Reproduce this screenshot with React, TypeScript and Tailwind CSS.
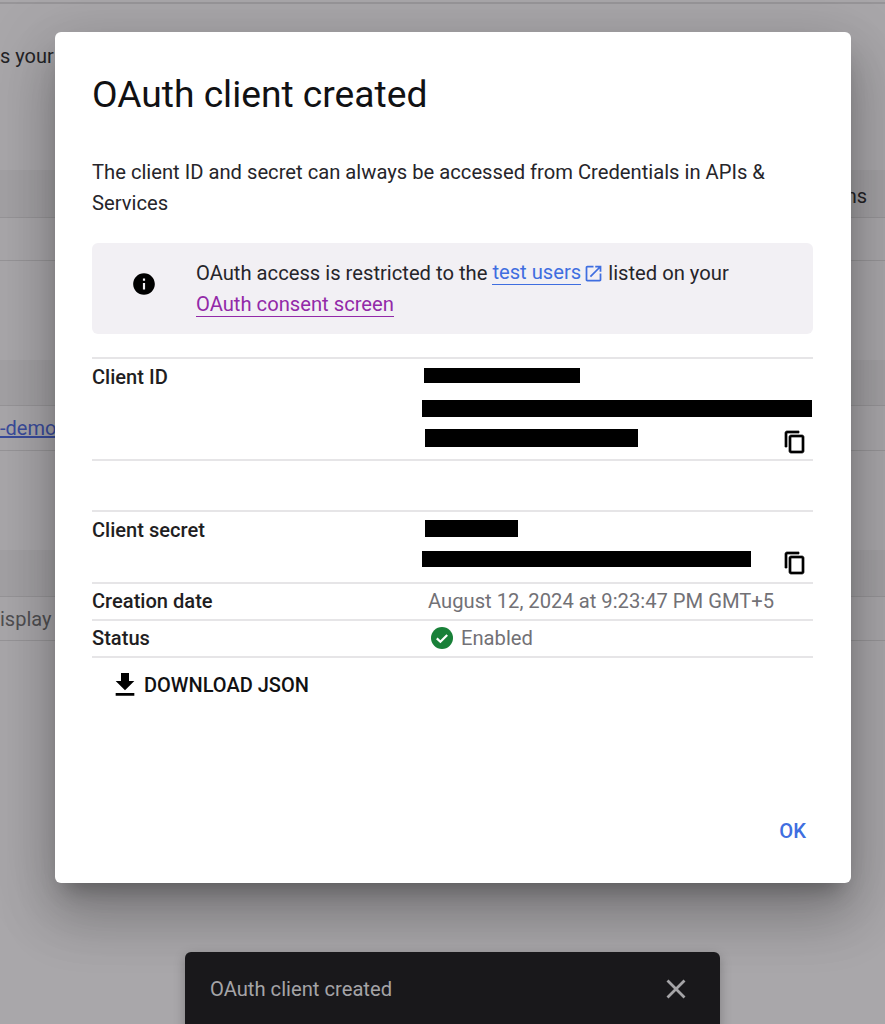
import React from "react";

const Icon = ({ d, className, bold }: { d: string; className: string; bold?: boolean }) => (
  <svg
    viewBox="0 0 24 24"
    fill="currentColor"
    stroke={bold ? "currentColor" : "none"}
    strokeWidth={bold ? 0.7 : 0}
    className={className}
  >
    <path d={d} />
  </svg>
);

const COPY =
  "M16 1H4c-1.1 0-2 .9-2 2v14h2V3h12V1zm3 4H8c-1.1 0-2 .9-2 2v14c0 1.1.9 2 2 2h11c1.1 0 2-.9 2-2V7c0-1.1-.9-2-2-2zm0 16H8V7h11v14z";

const Background = () => (
  <div className="flex h-[1024px] flex-col text-[20px] leading-[24px]">
    <div className="mt-[2px] h-[2px] bg-[#979598]" />
    <div className="mt-[40px] h-[24px] text-[#242326]">s your</div>
    <div className="mt-[102px] flex h-[47px] items-center justify-end bg-[#a3a1a4] pr-[18px] pt-[4px] text-[#242326]">
      <span>ns</span>
    </div>
    <div className="h-[1px] bg-[#979598]" />
    <div className="h-[42px]" />
    <div className="h-[1px] bg-[#979598]" />
    <div className="h-[99px]" />
    <div className="h-[45px] bg-[#a3a1a4]" />
    <div className="h-[1px] bg-[#979598]" />
    <div className="flex h-[44px] items-center text-[#3a4c9c]">
      <span className="underline">-demo</span>
    </div>
    <div className="h-[1px] bg-[#979598]" />
    <div className="h-[99px]" />
    <div className="h-[46px] bg-[#a3a1a4]" />
    <div className="h-[1px] bg-[#979598]" />
    <div className="flex h-[43px] items-center text-[#504f52]">isplay</div>
    <div className="h-[1px] bg-[#979598]" />
  </div>
);

const Row = ({ className, children }: { className: string; children: React.ReactNode }) => (
  <div className={`flex border-b-2 border-[#e6e5e7] ${className}`}>{children}</div>
);

export default function App() {
  return (
    <div
      className="relative h-[1024px] overflow-hidden bg-[#a9a7aa]"
      style={{ fontFamily: "Roboto, sans-serif" }}
    >
      <Background />

      <div className="absolute left-[55px] top-[32px] flex h-[851px] w-[796px] flex-col rounded-[6px] bg-white pl-[37px] pr-[38px] shadow-[0_16px_21px_-10px_rgba(0,0,0,0.28),0_34px_54px_4px_rgba(0,0,0,0.18),0_13px_66px_11px_rgba(0,0,0,0.12)]">
        <h1 className="mt-[39px] text-[37.2px] font-normal leading-[46px] text-[#111113]">
          OAuth client created
        </h1>
        <p className="mt-[40px] text-[20.2px] leading-[31px] text-[#26252a]">
          The client ID and secret can always be accessed from Credentials in APIs &amp; Services
        </p>

        <div className="mt-[24px] flex h-[91px] shrink-0 items-center rounded-[6px] bg-[#f2f0f4] pl-[39px] text-[20.2px] leading-[31px] text-[#26252a]">
          <Icon
            d="M12 2C6.48 2 2 6.48 2 12s4.48 10 10 10 10-4.48 10-10S17.52 2 12 2zm1 15h-2v-6h2v6zm0-8h-2V7h2v2z"
            className="mb-[9px] h-[26px] w-[26px] shrink-0 text-black"
          />
          <div className="ml-[39px]">
            <div className="flex items-center">
              <span>OAuth access is restricted to the&nbsp;</span>
              <span className="border-b border-[#3f6ee0] leading-[23px] text-[#3f6ee0]">test users</span>
              <Icon
                d="M19 19H5V5h7V3H5c-1.11 0-2 .9-2 2v14c0 1.1.89 2 2 2h14c1.1 0 2-.9 2-2v-7h-2v7zM14 3v2h3.59l-9.83 9.83 1.41 1.41L19 6.41V10h2V3h-7z"
                className="ml-[2px] mr-[-1px] h-[21px] w-[21px] text-[#3f6ee0]"
              />
              <span>&nbsp;listed on your</span>
            </div>
            <div>
              <span className="inline-block border-b border-[#9229a8] leading-[23px] text-[#9229a8]">
                OAuth consent screen
              </span>
            </div>
          </div>
        </div>

        <div className="mt-[23px] border-t-2 border-[#e6e5e7] text-[20.1px] font-medium leading-[24px] text-[#1f1e22]">
          <Row className="relative h-[102px] pt-[6px]">
            <div className="w-[330px]">Client ID</div>
            <div className="flex flex-col pt-[3px]">
              <div className="ml-[2px] h-[15px] w-[156px] bg-black" />
              <div className="mt-[17px] h-[17px] w-[390px] bg-black" />
              <div className="ml-[3px] mt-[12px] h-[18px] w-[213px] bg-black" />
            </div>
            <Icon bold d={COPY} className="absolute right-[6px] top-[71px] h-[24px] w-[24px] text-black" />
          </Row>
          <Row className="h-[51px]">
            <span />
          </Row>
          <Row className="relative h-[72px] pt-[6px]">
            <div className="w-[330px]">Client secret</div>
            <div className="flex flex-col pt-[2px]">
              <div className="ml-[3px] h-[17px] w-[93px] bg-black" />
              <div className="mt-[14px] h-[16px] w-[329px] bg-black" />
            </div>
            <Icon bold d={COPY} className="absolute right-[6px] top-[39px] h-[24px] w-[24px] text-black" />
          </Row>
          <Row className="h-[37px] items-center pb-[2px]">
            <div className="w-[336px]">Creation date</div>
            <div className="text-[20.2px] font-normal text-[#727176]">August 12, 2024 at 9:23:47 PM GMT+5</div>
          </Row>
          <Row className="h-[37px] items-center pb-[2px]">
            <div className="w-[338px]">Status</div>
            <svg viewBox="0 0 24 24" className="h-[24px] w-[24px]">
              <circle cx="12" cy="12" r="11" fill="#188038" />
              <path d="M6.8 12.4l3.6 3.4 6.8-6.8" fill="none" stroke="#fff" strokeWidth="2.2" />
            </svg>
            <div className="ml-[7px] text-[20.2px] font-normal text-[#727176]">Enabled</div>
          </Row>
        </div>

        <div className="mt-[11px] flex h-[32px] items-center pl-[17px] text-[20px] font-medium text-[#111113]">
          <Icon d="M19 9h-4V3H9v6H5l7 7 7-7zM5 18v2h14v-2H5z" className="h-[32px] w-[32px] text-black" />
          <span className="ml-[3px]">DOWNLOAD JSON</span>
        </div>

        <div className="mb-[40px] mt-auto flex justify-end pr-[7px] text-[20.2px] font-medium leading-[24px] text-[#3f6ee0]">
          OK
        </div>
      </div>

      <div className="absolute left-[185px] top-[952px] flex h-[80px] w-[535px] items-start justify-between rounded-[6px] bg-[#19181b] pl-[25px] pr-[34px] pt-[25px] text-[20.2px] leading-[24px] text-[#a5a4a7] shadow-[0_4px_12px_rgba(0,0,0,0.25)]">
        <span>OAuth client created</span>
        <svg viewBox="0 0 20 20" className="mt-[2px] h-[20px] w-[20px]">
          <path d="M1.5 1.5l17 17M18.5 1.5l-17 17" stroke="#a5a4a7" strokeWidth="2.8" />
        </svg>
      </div>
    </div>
  );
}
